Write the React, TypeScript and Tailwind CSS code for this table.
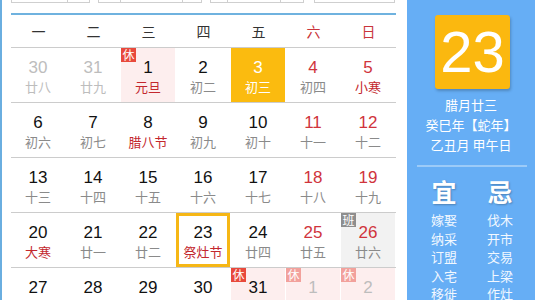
import React from 'react';

type Day = {
  n: number;
  lunar: string;
  dim?: boolean;
  weekend?: boolean;
  festival?: boolean;
  holiday?: 'rest' | 'restDim' | 'work';
  selected?: boolean;
  today?: boolean;
};

const WEEK = ['一', '二', '三', '四', '五', '六', '日'];

const ROWS: Day[][] = [
  [
    { n: 30, lunar: '廿八', dim: true },
    { n: 31, lunar: '廿九', dim: true },
    { n: 1, lunar: '元旦', festival: true, holiday: 'rest' },
    { n: 2, lunar: '初二' },
    { n: 3, lunar: '初三', selected: true },
    { n: 4, lunar: '初四', weekend: true },
    { n: 5, lunar: '小寒', weekend: true, festival: true },
  ],
  [
    { n: 6, lunar: '初六' },
    { n: 7, lunar: '初七' },
    { n: 8, lunar: '腊八节', festival: true },
    { n: 9, lunar: '初九' },
    { n: 10, lunar: '初十' },
    { n: 11, lunar: '十一', weekend: true },
    { n: 12, lunar: '十二', weekend: true },
  ],
  [
    { n: 13, lunar: '十三' },
    { n: 14, lunar: '十四' },
    { n: 15, lunar: '十五' },
    { n: 16, lunar: '十六' },
    { n: 17, lunar: '十七' },
    { n: 18, lunar: '十八', weekend: true },
    { n: 19, lunar: '十九', weekend: true },
  ],
  [
    { n: 20, lunar: '大寒', festival: true },
    { n: 21, lunar: '廿一' },
    { n: 22, lunar: '廿二' },
    { n: 23, lunar: '祭灶节', festival: true, today: true },
    { n: 24, lunar: '廿四' },
    { n: 25, lunar: '廿五', weekend: true },
    { n: 26, lunar: '廿六', weekend: true, holiday: 'work' },
  ],
  [
    { n: 27, lunar: '廿七' },
    { n: 28, lunar: '廿八' },
    { n: 29, lunar: '廿九' },
    { n: 30, lunar: '除夕', festival: true },
    { n: 31, lunar: '春节', festival: true, holiday: 'rest' },
    { n: 1, lunar: '初二', dim: true, holiday: 'restDim' },
    { n: 2, lunar: '初三', dim: true, holiday: 'restDim' },
  ],
];

const YI = ['嫁娶', '纳采', '订盟', '入宅', '移徙'];
const JI = ['伐木', '开市', '交易', '上梁', '作灶'];

const Cell: React.FC<{ d: Day }> = ({ d }) => {
  let bg = 'bg-white';
  if (d.selected) bg = 'bg-[#fbbb0f]';
  else if (d.holiday === 'rest' || d.holiday === 'restDim') bg = 'bg-[#fdeeee]';
  else if (d.holiday === 'work') bg = 'bg-[#f2f2f2]';

  let num = 'text-[#111]';
  if (d.selected) num = 'text-white';
  else if (d.dim) num = 'text-[#bdbdbd]';
  else if (d.weekend) num = 'text-[#d0343c]';

  let lunar = 'text-[#8a8a8a]';
  if (d.selected) lunar = 'text-white';
  else if (d.dim) lunar = 'text-[#bdbdbd]';
  else if (d.festival) lunar = 'text-[#c3282e]';

  return (
    <div className="w-[55px] h-[54px] shrink-0">
      <div
        className={`relative w-[54px] h-[54px] flex flex-col items-center ${bg} ${
          d.today ? 'border-[3px] border-[#f6b716] pt-[7px]' : 'pt-[10px]'
        }`}
      >
        {d.holiday && (
          <span
            className={`absolute top-0 left-0 w-[15px] h-[14px] text-[12px] leading-[14px] text-center text-white font-['Noto_Sans_CJK_SC',sans-serif] ${
              d.holiday === 'rest'
                ? 'bg-[#e8493c]'
                : d.holiday === 'restDim'
                ? 'bg-[#f2a19c]'
                : 'bg-[#8e8e8e]'
            }`}
          >
            {d.holiday === 'work' ? '班' : '休'}
          </span>
        )}
        <span className={`text-[17px] leading-[20px] font-['Liberation_Sans',Arial,sans-serif] ${num}`}>
          {d.n}
        </span>
        <span className={`text-[13px] leading-[18px] font-['Noto_Sans_CJK_SC',sans-serif] ${lunar}`}>
          {d.lunar}
        </span>
      </div>
    </div>
  );
};

export default function App() {
  return (
    <div className="flex w-[535px] h-[300px] overflow-hidden bg-white font-['Liberation_Sans','Noto_Sans_CJK_SC',sans-serif]">
      {/* calendar */}
      <div className="w-[407px] h-full shrink-0 overflow-hidden border-l-2 border-[#6aaee0] pl-[9px] flex flex-col">
        {/* bottoms of the month / year selectors */}
        <div className="flex h-[3px] shrink-0 items-stretch">
          <div className="flex w-[79px] border-x border-b border-[#cfcfcf]">
            <div className="w-[56px] border-r border-[#cfcfcf]" />
          </div>
          <div className="flex w-[104px] ml-[8px] border-x border-b border-[#cfcfcf]">
            <div className="w-[22px] border-r border-[#cfcfcf]" />
            <div className="w-[62px] border-r border-[#cfcfcf]" />
          </div>
          <div className="flex w-[94px] ml-[8px] border-x border-b border-[#cfcfcf]">
            <div className="w-[17px] border-r border-[#cfcfcf]" />
            <div className="w-[53px] border-r border-[#cfcfcf]" />
          </div>
          <div className="w-[81px] ml-[10px] border-x border-b border-[#cfcfcf]" />
        </div>

        <div className="w-[385px] mt-[10px] h-[2px] shrink-0 bg-[#6fb2df]" />

        {/* weekday header */}
        <div className="grid grid-cols-7 w-[385px] h-[33px] shrink-0 border-b border-[#cccccc]">
          {WEEK.map((w, i) => (
            <div
              key={w}
              className={`flex items-center justify-center text-[14px] font-['Noto_Sans_CJK_SC',sans-serif] ${
                i >= 5 ? 'text-[#c9353b]' : 'text-[#333]'
              }`}
            >
              {w}
            </div>
          ))}
        </div>

        {ROWS.map((row, r) => (
          <div key={r} className="flex w-[385px] h-[55px] shrink-0 border-b border-[#cccccc]">
            {row.map((d, c) => (
              <Cell key={c} d={d} />
            ))}
          </div>
        ))}
      </div>

      {/* side panel */}
      <div className="w-[128px] h-full shrink-0 bg-[#66aef5] flex flex-col items-center font-['Noto_Sans_CJK_SC',sans-serif] text-white">
        <div className="mt-[15px] ml-[3px] w-[75px] h-[74px] shrink-0 rounded-[3px] bg-[#fbb80f] shadow-[1px_2px_3px_rgba(0,0,0,0.22)] flex items-center justify-center">
          <span className="text-[58px] leading-none font-['Liberation_Sans',Arial,sans-serif] text-white">23</span>
        </div>
        <div className="mt-[6px] flex flex-col items-center text-[13px] leading-[20px]">
          <span>腊月廿三</span>
          <span>癸巳年【蛇年】</span>
          <span>乙丑月 甲午日</span>
        </div>
        <div className="mt-[10px] ml-[2px] w-[110px] h-[2px] shrink-0 bg-[#9ccbf8]" />
        <div className="mt-[11px] ml-[2px] grid grid-cols-2 w-[112px]">
          <div className="flex flex-col items-center">
            <span className="text-[25px] leading-[26px] font-bold [text-shadow:1px_1px_2px_rgba(0,0,0,0.25)]">宜</span>
            <div className="mt-[7px] flex flex-col items-center text-[13px] leading-[18.5px] text-[#f2f8ff]">
              {YI.map((t) => (
                <span key={t}>{t}</span>
              ))}
            </div>
          </div>
          <div className="flex flex-col items-center">
            <span className="text-[25px] leading-[26px] font-bold [text-shadow:1px_1px_2px_rgba(0,0,0,0.25)]">忌</span>
            <div className="mt-[7px] flex flex-col items-center text-[13px] leading-[18.5px] text-[#f2f8ff]">
              {JI.map((t) => (
                <span key={t}>{t}</span>
              ))}
            </div>
          </div>
        </div>
      </div>
    </div>
  );
}
